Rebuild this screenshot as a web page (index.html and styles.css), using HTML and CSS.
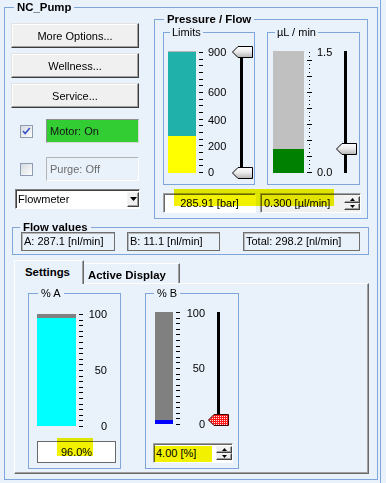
FILE: index.html
```html
<!DOCTYPE html>
<html lang="en">
<head>
  <meta charset="UTF-8">
  <title>NC_Pump</title>
  <link rel="stylesheet" href="styles.css">
</head>
<body>
<div class="frame">
  <fieldset class="grp outer">
    <legend class="title">NC_Pump</legend>

    <div class="top-row">
      <div class="left-col">
        <button class="btn">More Options...</button>
        <button class="btn">Wellness...</button>
        <button class="btn">Service...</button>

        <div class="check-row motor-row">
          <span class="chk"><svg width="11" height="11" viewBox="0 0 11 11"><path d="M2 5 L4.2 7.6 L8.8 2" fill="none" stroke="#3653c8" stroke-width="1.6"/></svg></span>
          <span class="state on">Motor: On</span>
        </div>
        <div class="check-row purge-row">
          <span class="chk"></span>
          <span class="state off">Purge: Off</span>
        </div>

        <div class="combo">
          <span class="combo-text">Flowmeter</span>
          <span class="drop raised"><svg width="7" height="4" viewBox="0 0 7 4"><path d="M0 0 H7 L3.5 4 Z" fill="#000"/></svg></span>
        </div>
      </div>

      <fieldset class="grp pressure">
        <legend class="title">Pressure / Flow</legend>
        <div class="meters">
          <fieldset class="grp limits">
            <legend>Limits</legend>
            <div class="meter">
              <div class="bar"><div class="fill" style="height:31%; background:#ffff00"></div></div>
              <svg class="ticks" width="6" height="123" viewBox="0 0 6 123" shape-rendering="crispEdges">
                <path stroke="#000" d="M1 1.5h4M1 8.5h4M1 14.5h4M1 21.5h4M1 28.5h4M1 34.5h4M1 41.5h4M1 48.5h4M1 54.5h4M1 61.5h4M1 68.5h4M1 74.5h4M1 81.5h4M1 88.5h4M1 94.5h4M1 101.5h4M1 108.5h4M1 114.5h4M1 121.5h4"/>
              </svg>
              <div class="scale-labels">
                <span style="top:-5px">900</span>
                <span style="top:35px">600</span>
                <span style="top:63px">400</span>
                <span style="top:89px">200</span>
                <span style="top:115px">0</span>
              </div>
              <div class="slider">
                <div class="track"></div>
                <svg class="thumb" style="top:-5px" width="21" height="12" viewBox="0 0 21 12">
                  <defs>
                    <linearGradient id="thumbFill" x1="0" y1="0" x2="0" y2="1">
                      <stop offset="0" stop-color="#fdfdfd"/>
                      <stop offset="0.45" stop-color="#ececec"/>
                      <stop offset="1" stop-color="#b4b4b4"/>
                    </linearGradient>
                  </defs>
                  <path d="M0.5 6 L6 0.5 H20.5 V11.5 H6 Z" fill="url(#thumbFill)" stroke="#000"/>
                </svg>
                <svg class="thumb" style="top:116px" width="21" height="12" viewBox="0 0 21 12">
                  <path d="M0.5 6 L6 0.5 H20.5 V11.5 H6 Z" fill="url(#thumbFill)" stroke="#000"/>
                </svg>
              </div>
            </div>
          </fieldset>

          <fieldset class="grp flow">
            <legend>µL / min</legend>
            <div class="meter">
              <div class="bar"><div class="fill" style="height:20%; background:#008000"></div></div>
              <svg class="ticks" width="6" height="123" viewBox="0 0 6 123" shape-rendering="crispEdges">
                <path stroke="#000" d="M0 121.5h5M0 105.5h5M0 89.5h5M0 73.5h5M0 57.5h5M0 41.5h5M0 25.5h5M0 9.5h5"/>
                <path stroke="#000" d="M2 117.5h1M2 113.5h1M2 109.5h1M2 101.5h1M2 97.5h1M2 93.5h1M2 85.5h1M2 81.5h1M2 77.5h1M2 69.5h1M2 65.5h1M2 61.5h1M2 53.5h1M2 49.5h1M2 45.5h1M2 37.5h1M2 33.5h1M2 29.5h1M2 21.5h1M2 17.5h1M2 13.5h1M2 5.5h1M2 1.5h1"/>
              </svg>
              <div class="scale-labels">
                <span style="top:-5px">1.5</span>
                <span style="top:115px">0.0</span>
              </div>
              <div class="slider">
                <div class="track"></div>
                <svg class="thumb" style="top:92px" width="21" height="12" viewBox="0 0 21 12">
                  <path d="M0.5 6 L6 0.5 H20.5 V11.5 H6 Z" fill="url(#thumbFill)" stroke="#000"/>
                </svg>
              </div>
            </div>
          </fieldset>
        </div>

        <div class="readouts">
          <div class="value-box pressure-val">285.91 [bar]</div>
          <div class="value-box spin-box flow-val">
            <span class="val">0.300 [µl/min]</span>
            <span class="spin-btns">
              <span class="raised"><svg width="5" height="3" viewBox="0 0 5 3"><path d="M0 3 L2.5 0 L5 3 Z" fill="#000"/></svg></span>
              <span class="raised"><svg width="5" height="3" viewBox="0 0 5 3"><path d="M0 0 H5 L2.5 3 Z" fill="#000"/></svg></span>
            </span>
          </div>
          <div class="marker m-pressure"></div>
        </div>
      </fieldset>
    </div>

    <fieldset class="grp flowvalues">
      <legend class="title">Flow values</legend>
      <div class="fv-row">
        <div class="fv fv-a">A: 287.1 [nl/min]</div>
        <div class="fv fv-b">B: 11.1 [nl/min]</div>
        <div class="fv fv-total">Total: 298.2 [nl/min]</div>
      </div>
    </fieldset>

    <div class="tabs">
      <div class="tab-strip">
        <div class="tab active">Settings</div>
        <div class="tab inactive">Active Display</div>
      </div>
      <div class="tab-page">
        <fieldset class="grp pct-a">
          <legend>% A</legend>
          <div class="meter-pct">
            <div class="bar"><div class="fill" style="height:96%; background:#00ffff"></div></div>
            <svg class="ticks" width="5" height="113" viewBox="0 0 5 113" shape-rendering="crispEdges">
              <path stroke="#000" d="M0 0.5h4M0 6.5h4M0 11.5h4M0 17.5h4M0 22.5h4M0 28.5h4M0 34.5h4M0 39.5h4M0 45.5h4M0 50.5h4M0 56.5h4M0 62.5h4M0 67.5h4M0 73.5h4M0 78.5h4M0 84.5h4M0 90.5h4M0 95.5h4M0 101.5h4M0 106.5h4M0 112.5h4"/>
            </svg>
            <div class="scale-labels">
              <span style="top:-6px">100</span>
              <span style="top:50px">50</span>
              <span style="top:106px">0</span>
            </div>
          </div>
          <div class="pct-val">96.0%<div class="marker m-pct-a"></div></div>
        </fieldset>

        <fieldset class="grp pct-b">
          <legend>% B</legend>
          <div class="meter-pct">
            <div class="bar"><div class="fill" style="height:4%; background:#0000ff"></div></div>
            <svg class="ticks" width="5" height="113" viewBox="0 0 5 113" shape-rendering="crispEdges">
              <path stroke="#000" d="M0 0.5h4M0 6.5h4M0 11.5h4M0 17.5h4M0 22.5h4M0 28.5h4M0 34.5h4M0 39.5h4M0 45.5h4M0 50.5h4M0 56.5h4M0 62.5h4M0 67.5h4M0 73.5h4M0 78.5h4M0 84.5h4M0 90.5h4M0 95.5h4M0 101.5h4M0 106.5h4M0 112.5h4"/>
            </svg>
            <div class="scale-labels">
              <span style="top:-5px">100</span>
              <span style="top:50px">50</span>
              <span style="top:106px">0</span>
            </div>
            <div class="slider">
              <div class="track"></div>
              <svg class="thumb" style="top:102px" width="21" height="12" viewBox="0 0 21 12">
                <defs>
                  <pattern id="redDots" width="2" height="2" patternUnits="userSpaceOnUse">
                    <rect width="2" height="2" fill="#ff1a1a"/>
                    <rect width="1" height="1" fill="#ffe6e6"/>
                  </pattern>
                </defs>
                <path d="M0.5 6 L6 0.5 H20.5 V11.5 H6 Z" fill="url(#redDots)" stroke="#3a0000"/>
              </svg>
            </div>
          </div>
          <div class="value-box spin-box pctb-val">
            <span class="val">4.00 [%]</span>
            <span class="spin-btns">
              <span class="raised"><svg width="5" height="3" viewBox="0 0 5 3"><path d="M0 3 L2.5 0 L5 3 Z" fill="#000"/></svg></span>
              <span class="raised"><svg width="5" height="3" viewBox="0 0 5 3"><path d="M0 0 H5 L2.5 3 Z" fill="#000"/></svg></span>
            </span>
            <div class="marker m-pct-b"></div>
          </div>
        </fieldset>
      </div>
    </div>
  </fieldset>
</div>
</body>
</html>
```

FILE: styles.css
```css
body {
  margin: 0;
  background-color: #e9f1fb;
  font-family: "Liberation Sans", Arial, sans-serif;
  font-size: 11px;
  color: #000;
}
.frame {
  width: 380px;
  height: 483px;
  border-right: 1px solid #7ea6da;
  overflow: hidden;
}

/* group boxes */
.grp {
  margin: 0;
  padding: 0;
  border: 1px solid #7ea6da;
  min-width: 0;
  box-sizing: border-box;
}
.grp > legend {
  padding: 0 2px;
  line-height: 13px;
  font-size: 11px;
}
.grp > legend.title {
  padding: 0 3px;
  font-weight: bold;
  font-size: 11.4px;
}
.outer {
  width: 374px;
  margin: 1px 0 0 4px;
  padding-bottom: 5px;
}
.outer > legend { margin-left: 9px; }

/* 3d look */
.raised {
  box-sizing: border-box;
  background: #f0f0f0;
  border: 1px solid;
  border-color: #f4f4f4 #404040 #404040 #f4f4f4;
  box-shadow: inset -1px -1px 0 #a0a0a0;
}

/* left column */
.top-row {
  display: flex;
  align-items: flex-start;
}
.left-col {
  width: 129px;
  margin: 9px 0 0 6px;
  display: flex;
  flex-direction: column;
  align-items: flex-start;
}
.btn {
  width: 128px;
  height: 25px;
  padding: 0;
  font: inherit;
  color: #000;
  background: #f0f0f0;
  border: 1px solid;
  border-color: #e3e3e3 #3c3c3c #3c3c3c #e3e3e3;
  box-shadow: inset -1px -1px 0 #a0a0a0, inset 1px 1px 0 #fff;
}
.btn + .btn { margin-top: 5px; }

.check-row {
  display: flex;
  align-items: center;
  height: 24px;
}
.motor-row { margin-top: 11px; }
.purge-row { margin-top: 14px; }
.chk {
  width: 13px;
  height: 13px;
  margin-left: 9px;
  box-sizing: border-box;
  border: 1px solid #8e9cb3;
  background: linear-gradient(135deg, #d6dae1, #fdfdfd);
}
.chk svg { display: block; }
.state {
  width: 93px;
  height: 24px;
  margin-left: 13px;
  box-sizing: border-box;
  padding-left: 3px;
  line-height: 22px;
  border: 1px solid;
}
.state.on {
  background: #32cd32;
  border-color: #8d8d8d #d8d8d8 #d8d8d8 #8d8d8d;
  color: #141414;
}
.state.off {
  border-color: #b4b4b4 #fff #fff #b4b4b4;
  color: #6d6d6d;
}

.combo {
  width: 125px;
  height: 20px;
  margin: 8px 0 0 4px;
  box-sizing: border-box;
  display: flex;
  align-items: center;
  background: #fff;
  border: 1px solid;
  border-color: #808080 #fff #fff #808080;
  box-shadow: inset 1px 1px 0 #404040;
}
.combo-text {
  flex: 1;
  padding-left: 2px;
}
.drop {
  width: 12px;
  height: 15px;
  display: flex;
  align-items: center;
  justify-content: center;
}

/* pressure / flow */
.pressure {
  width: 214px;
  margin: -1px 0 0 14px;
  padding-bottom: 5px;
}
.pressure > legend { margin-left: 9px; }
.meters { display: flex; }
.limits {
  width: 92px;
  margin-left: 8px;
}
.limits > legend { margin-left: 6px; }
.flow {
  width: 93px;
  margin-left: 12px;
}
.flow > legend { margin-left: 7px; }

.meter {
  display: flex;
  align-items: flex-start;
  height: 145px;
  padding-top: 12px;
  box-sizing: border-box;
}
.bar {
  height: 122px;
  flex: none;
  display: flex;
  flex-direction: column;
  justify-content: flex-end;
}
.fill { width: 100%; }
.limits .bar {
  width: 28px;
  margin-left: 4px;
  background: #20b2aa;
  border-top: 1px solid #b8b8b8;
  box-sizing: border-box;
}
.flow .bar {
  width: 31px;
  margin-left: 5px;
  background: #c0c0c0;
}
.ticks {
  display: block;
  flex: none;
}
.limits .ticks { margin-left: 2px; }
.flow .ticks { margin-left: 3px; }

.scale-labels {
  position: relative;
  height: 122px;
  flex: none;
}
.scale-labels span {
  position: absolute;
  left: 0;
  line-height: 13px;
}
.limits .scale-labels {
  width: 24px;
  margin-left: 4px;
}
.flow .scale-labels {
  width: 19px;
  margin-left: 4px;
}
.slider {
  position: relative;
  width: 21px;
  height: 122px;
  flex: none;
}
.track {
  position: absolute;
  top: 0;
  bottom: 0;
  left: 8px;
  width: 3px;
  background: #000;
}
.thumb {
  position: absolute;
  left: 0;
  display: block;
}

.readouts {
  position: relative;
  display: flex;
  margin-top: 8px;
}
.value-box {
  height: 20px;
  box-sizing: border-box;
  border: 1px solid;
  border-color: #a0a0a0 #fff #fff #a0a0a0;
  box-shadow: inset 1px 1px 0 #696969;
  background: #fff;
  line-height: 18px;
}
.pressure-val {
  width: 93px;
  margin-left: 8px;
  text-align: center;
}
.spin-box {
  display: flex;
  align-items: center;
}
.spin-box .val {
  flex: 1;
  padding-left: 3px;
}
.flow-val {
  width: 101px;
  margin-left: 4px;
  background: #f0f0f0;
}
.spin-btns {
  width: 16px;
  display: flex;
  flex-direction: column;
}
.spin-btns span {
  height: 7px;
  display: flex;
  align-items: center;
  justify-content: center;
}
.spin-btns svg { display: block; }

/* yellow marker highlights */
.marker {
  position: absolute;
  background: #f2f200;
  mix-blend-mode: multiply;
  pointer-events: none;
}
.m-pressure {
  left: 19px;
  top: -4px;
  width: 160px;
  height: 17px;
}

/* flow values */
.flowvalues {
  width: 357px;
  margin: 2px 0 0 7px;
  padding-bottom: 3px;
}
.flowvalues > legend { margin-left: 7px; }
.fv-row {
  display: flex;
  margin-top: -2px;
}
.fv {
  height: 19px;
  box-sizing: border-box;
  padding-left: 2px;
  line-height: 17px;
  white-space: nowrap;
  border: 1px solid #6e6e6e;
  box-shadow: inset 1px 1px 0 #b8b8b8;
}
.fv-a { width: 94px; margin-left: 8px; }
.fv-b { width: 93px; margin-left: 12px; }
.fv-total { width: 117px; margin-left: 23px; }

/* tabs */
.tabs {
  width: 355px;
  margin: 5px 0 0 9px;
}
.tab-strip {
  display: flex;
  align-items: flex-end;
  height: 23px;
}
.tab {
  box-sizing: border-box;
  padding-top: 5px;
  font-weight: bold;
  font-size: 11.4px;
  line-height: 13px;
  border-top: 1px solid #fff;
  border-right: 1px solid #696969;
  box-shadow: inset -1px 0 0 #a0a0a0;
}
.tab.active {
  position: relative;
  width: 70px;
  height: 24px;
  margin-bottom: -1px;
  padding-left: 10px;
  border-left: 1px solid #fff;
  background: #e9f1fb;
}
.tab.inactive {
  width: 96px;
  height: 20px;
  padding-left: 4px;
}
.tab-page {
  height: 191px;
  box-sizing: border-box;
  display: flex;
  align-items: flex-start;
  border: 1px solid;
  border-color: #fff #696969 #696969 #fff;
  box-shadow: inset -1px -1px 0 #a0a0a0;
}

.pct-a {
  width: 93px;
  margin: 3px 0 0 13px;
  padding-bottom: 5px;
}
.pct-a > legend { margin-left: 9px; padding: 0 3px; }
.pct-b {
  width: 94px;
  margin: 3px 0 0 24px;
  padding-bottom: 5px;
}
.pct-b > legend { margin-left: 8px; padding: 0 3px; }

.meter-pct {
  display: flex;
  align-items: flex-start;
  height: 112px;
}
.pct-a .meter-pct { margin-top: 14px; }
.pct-b .meter-pct { margin-top: 12px; }
.meter-pct .bar {
  height: 112px;
  background: #808080;
}
.pct-a .bar { width: 39px; margin-left: 8px; }
.pct-b .bar { width: 18px; margin-left: 9px; }
.meter-pct .ticks { margin-left: 3px; }
.meter-pct .scale-labels { height: 112px; }
.meter-pct .scale-labels span { left: auto; right: 0; }
.pct-a .scale-labels { width: 23px; }
.pct-b .scale-labels { width: 24px; }
.pct-b .slider {
  height: 112px;
  margin-left: 3px;
}
.pct-b .track { left: 9px; }

.pct-val {
  position: relative;
  width: 79px;
  height: 22px;
  margin: 15px 0 0 8px;
  box-sizing: border-box;
  border: 1px solid #6a6a6a;
  background: #fff;
  text-align: center;
  line-height: 20px;
}
.m-pct-a {
  left: 19px;
  top: -4px;
  width: 36px;
  height: 18px;
}
.pctb-val {
  position: relative;
  width: 80px;
  margin: 19px 0 0 7px;
}
.pctb-val .val { padding-left: 2px; }
.m-pct-b {
  left: 0;
  top: 2px;
  width: 58px;
  height: 16px;
}
```
